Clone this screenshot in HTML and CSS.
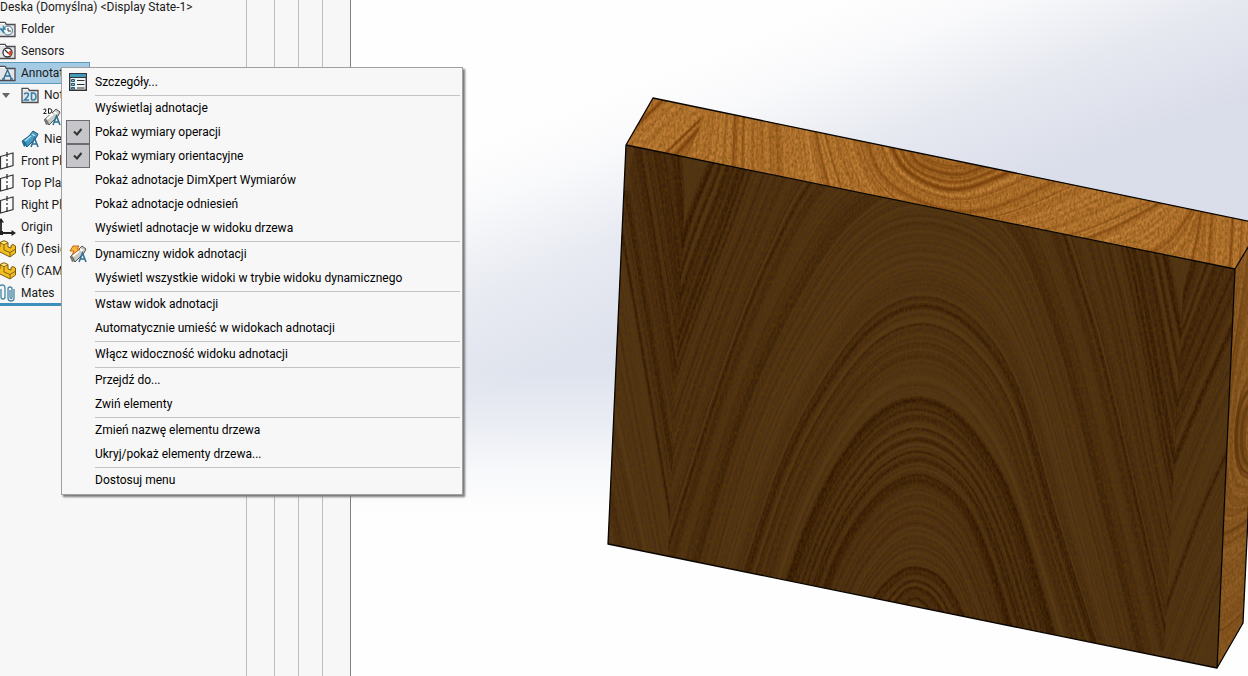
FILE: index.html
```html
<!DOCTYPE html>
<html lang="pl">
<head>
<meta charset="utf-8">
<title>Deska</title>
<link rel="stylesheet" href="styles.css">
</head>
<body>
<svg class="defs" aria-hidden="true">
  <symbol id="i-folder" viewBox="0 0 18 18"><path d="M1 16.500V2.500h6l1.500 2H17v12z" fill="#e4e5e8" stroke="#4c4c50" stroke-width="1.300"/><path d="M2 3.500h5" stroke="#fff"/></symbol>
  <symbol id="i-glass" viewBox="0 0 18 18"><path d="M1 12 9 5l4-4 4 3-2 4-9 9z" fill="#c9c9c6" stroke="#55554f"/><path d="m4 11 6-5m1-2 3 2" stroke="#fff" stroke-width="2"/><path d="M1 12c0-2 4-1 5 4l-3 1z" fill="#777773"/><path d="m10 17 3.500-9L17 17m-6-3h5" fill="none" stroke="#2f7194" stroke-width="1.600"/></symbol>
  <symbol id="i-plane" viewBox="0 0 18 18"><path d="M2.500 4.500 15 1v12.500L2.500 17z" fill="#fafafa" stroke="#333" stroke-width="1.200"/><path d="M9 0v18" stroke="#333" stroke-width="1.300" stroke-dasharray="5 2 2 2"/></symbol>
  <symbol id="i-part" viewBox="0 0 18 18"><path d="M2 7V2.500L6 .7l4 1.800V7l3 1V5.500l2-1 2.500 1.500v7L12 17 1 11.500V8z" fill="#f3bd22" stroke="#775c10"/><path d="m2 3 4 1.500L10 3M6 4.500V10l6 2.500 5-3M12 12.500V17" fill="none" stroke="#80630d"/><path d="m3 2.700 3-1.200 3 1.200-3 1.200z" fill="#ffe787"/></symbol>
</svg>

<div class="app">
  <aside class="panel">
    <ul class="tree">
      <li class="row row-root">Deska (Domyślna) &lt;Display State-1&gt;</li>
      <li class="row"><svg class="icon" viewBox="0 0 18 18"><use href="#i-folder"/><circle cx="10" cy="10.500" r="4.500" fill="#f5fafd" stroke="#456f87"/><path d="M10 8v3h3" fill="none" stroke="#333"/><path d="M2 9h5l-2-3M3 9l3 4" fill="none" stroke="#2f86ad" stroke-width="1.500"/></svg>Folder</li>
      <li class="row"><svg class="icon" viewBox="0 0 18 18"><use href="#i-folder"/><circle cx="9.500" cy="10.500" r="4.500" fill="#fff" stroke="#333" stroke-width="1.300"/><path d="M9.500 11 13 8l1 4-2 2z" fill="#d8472d"/><path d="m7 8 3 3" stroke="#333" stroke-width="1.300"/></svg>Sensors</li>
      <li class="row"><span class="picked"><svg class="icon" viewBox="0 0 18 18"><use href="#i-folder"/><path d="m5.500 15 4-9L13.500 15M7 12h5M4 15h3m5 0h3" fill="none" stroke="#2f7194" stroke-width="1.400"/></svg>Annotations</span></li>
      <li class="row row-twisty"><svg class="twisty" viewBox="0 0 8 5"><path d="M0 0h8L4 5z" fill="#666"/></svg><svg class="icon" viewBox="0 0 18 18"><use href="#i-folder"/><path d="M3.500 8.500q0-1.500 2-1.500t2 1.500q0 1.500-4 5.500h4.500M10.500 14V7q4.500-.5 4.500 3.500T10.500 14" fill="none" stroke="#2f7ea6" stroke-width="1.500"/></svg>Notes Area</li>
      <li class="row row-third"><svg class="icon" viewBox="0 0 18 18"><use href="#i-glass"/><path d="M0 0h9v7H0z" fill="#f7f7f7"/><path d="M.5 1.500Q3 0 3 2T.5 5.500h3M5.500 5.500v-5Q9 .5 9 3T5.500 5.500" fill="none" stroke="#222"/></svg></li>
      <li class="row row-second"><svg class="icon" viewBox="0 0 18 18"><path d="m1 11 7-5 4-5 5 3-2 4-9 9z" fill="#469bc5" stroke="#235871"/><path d="m4 11 6-5m1-2 3 2" stroke="#b1e1f4" stroke-width="1.500"/><path d="M1 12c0-2 4-1 5 3l-3 2z" fill="#236c91"/><path d="m10 17 3.500-9L17 17m-6-3h5" fill="none" stroke="#2f7194" stroke-width="1.600"/></svg>Nie</li>
      <li class="row"><svg class="icon"><use href="#i-plane"/></svg>Front Plane</li>
      <li class="row"><svg class="icon"><use href="#i-plane"/></svg>Top Plane</li>
      <li class="row"><svg class="icon"><use href="#i-plane"/></svg>Right Plane</li>
      <li class="row"><svg class="icon" viewBox="0 0 18 18"><path d="M3 1v14h13" fill="none" stroke="#222" stroke-width="1.800"/><path d="M0 4.500 3 0l3 4.500zM13.500 12l4.500 3-4.500 3z" fill="#222"/><path d="M1 13h4v4H1z" fill="#222"/></svg>Origin</li>
      <li class="row"><svg class="icon"><use href="#i-part"/></svg>(f) Design</li>
      <li class="row"><svg class="icon"><use href="#i-part"/></svg>(f) CAM</li>
      <li class="row row-last"><svg class="icon" viewBox="0 0 18 18"><path d="M3 5v8q0 2 2 2t2-2V4q0-3-3-3T1 4v9M12 6v7q0 1.500 1 1.500t1-1.500V5q0-2-2-2t-2 2v9q0 3 3 3t3-3V5" fill="none" stroke="#4386a4" stroke-width="1.300"/></svg>Mates</li>
    </ul>
    <div class="col col-wide"></div>
    <div class="col"></div>
    <div class="col"></div>
    <div class="col col-wide"></div>
  </aside>

  <main class="viewport">
    <svg class="scene" viewBox="351 0 897 676" preserveAspectRatio="xMinYMin slice" role="img" aria-label="Deska">
      <defs>
        <linearGradient id="sky" gradientUnits="userSpaceOnUse" x1="0" y1="0" x2="0" y2="676">
          <stop offset="0" stop-color="#dadde9"/><stop offset=".3" stop-color="#dadeea"/><stop offset=".55" stop-color="#dfe3ed"/><stop offset=".62" stop-color="#e9ecf3"/><stop offset=".7" stop-color="#f8f9fb"/><stop offset=".76" stop-color="#fefefe"/>
        </linearGradient>
        <linearGradient id="glow" gradientUnits="userSpaceOnUse" x1="460" y1="150" x2="546" y2="371">
          <stop offset="0" stop-color="#fefefe"/><stop offset=".25" stop-color="#fefefe" stop-opacity=".85"/><stop offset=".6" stop-color="#fefefe" stop-opacity=".35"/><stop offset="1" stop-color="#fefefe" stop-opacity="0"/>
        </linearGradient>
        <filter id="noise" x="0" y="0" width="1" height="1">
          <feTurbulence type="fractalNoise" baseFrequency=".5 .25" numOctaves="3" seed="4"/>
          <feColorMatrix values="0 0 0 0 .12  0 0 0 0 .05  0 0 0 0 0  2.200 0 0 0 -.8"/>
          <feComposite in2="SourceGraphic" operator="in"/>
        </filter>
        <clipPath id="c-front"><path d="M626 145 1235 269 1217 668 608 544z"/></clipPath>
        <clipPath id="c-fl"><path d="M600 100H689L667 580H600z"/></clipPath>
        <clipPath id="c-fm"><path d="M689 100 667 580 1162 690 1187 220z"/></clipPath>
        <clipPath id="c-fr"><path d="M1187 220 1162 690H1248V220z"/></clipPath>
        <clipPath id="c-top"><path d="M653 98 1262 224 1235 269 626 145z"/></clipPath>
        <clipPath id="c-tl"><path d="M600 80H705L700 126 684 165H600z"/></clipPath>
        <clipPath id="c-tm"><path d="M705 80 700 126 684 165 1180 275 1197 228 1203 190z"/></clipPath>
        <clipPath id="c-tr"><path d="M1203 190 1197 228 1180 275H1270V190z"/></clipPath>
        <clipPath id="c-side"><path d="M1235 269 1262 224 1243 623 1217 668z"/></clipPath>
      </defs>
      <path d="M351 0h897v676H351z" fill="url(#sky)"/>
      <path d="M351 0h897v676H351z" fill="url(#glow)"/>
      <g clip-path="url(#c-front)">
        <path d="M600 140h640v540H600z" fill="#4f3316"/>
        <g clip-path="url(#c-fl)"><g id="front-left"></g></g>
        <g clip-path="url(#c-fm)"><g id="front-mid"></g></g>
        <g clip-path="url(#c-fr)"><g id="front-right"></g></g>
        <path d="M600 140h640v540H600z" filter="url(#noise)" opacity=".5"/>
      </g>
      <g clip-path="url(#c-top)">
        <path d="M620 90h640v190H620z" fill="#bd7b35"/>
        <g clip-path="url(#c-tl)"><g id="top-left"></g></g>
        <g clip-path="url(#c-tm)"><g id="top-mid"></g></g>
        <g clip-path="url(#c-tr)"><g id="top-right"></g></g>
        <path d="M620 90h640v190H620z" filter="url(#noise)" opacity=".5"/>
      </g>
      <g clip-path="url(#c-side)">
        <path d="M1210 220h60v460h-60z" fill="#8d5a25"/>
        <g id="side"></g>
        <path d="M1210 220h60v460h-60z" filter="url(#noise)" opacity=".5"/>
      </g>
      <path d="M626 145 653 98 1262 224 1235 269zM626 145 608 544 1217 668 1235 269M1217 668 1243 623 1262 224" fill="none" stroke="#080502" stroke-width="1.300" stroke-linejoin="round"/>
    </svg>
  </main>

  <div class="menu" role="menu">
    <button class="item" role="menuitem"><svg class="item-icon" viewBox="0 0 18 18"><path d="M.7 .7h16.600v16.600H.7z" fill="#eef3f6" stroke="#333" stroke-width="1.400"/><path d="M1 1h16v3H1z" fill="#4397b9"/><path d="M0 4.500h18" stroke="#333"/><path d="M2.500 6.500h3v2h-3zm0 4h3v2h-3zm0 4h3v1.500h-3z" fill="#8ac5df" stroke="#23546b"/><path d="M8 7.500h7.500M8 11.500h7.500M8 15h7.500" stroke="#333" stroke-width="1.200"/></svg>Szczegóły...</button>
    <hr class="rule">
    <button class="item" role="menuitem">Wyświetlaj adnotacje</button>
    <label class="item"><span class="tick"><input class="tick-box" type="checkbox" checked><svg class="tick-mark" viewBox="0 0 10 10"><path d="m1 4.500 3 3L8.500 2" fill="none" stroke="#333" stroke-width="2"/></svg></span>Pokaż wymiary operacji</label>
    <label class="item"><span class="tick"><input class="tick-box" type="checkbox" checked><svg class="tick-mark" viewBox="0 0 10 10"><path d="m1 4.500 3 3L8.500 2" fill="none" stroke="#333" stroke-width="2"/></svg></span>Pokaż wymiary orientacyjne</label>
    <button class="item" role="menuitem">Pokaż adnotacje DimXpert Wymiarów</button>
    <button class="item" role="menuitem">Pokaż adnotacje odniesień</button>
    <button class="item" role="menuitem">Wyświetl adnotacje w widoku drzewa</button>
    <hr class="rule">
    <button class="item" role="menuitem"><svg class="item-icon" viewBox="0 0 18 18"><use href="#i-glass"/><path d="M4 1h6L8 4h3L3 10l2-4H1z" fill="#f8b83c" stroke="#c5641b"/></svg>Dynamiczny widok adnotacji</button>
    <button class="item" role="menuitem">Wyświetl wszystkie widoki w trybie widoku dynamicznego</button>
    <hr class="rule">
    <button class="item" role="menuitem">Wstaw widok adnotacji</button>
    <button class="item" role="menuitem">Automatycznie umieść w widokach adnotacji</button>
    <hr class="rule">
    <button class="item" role="menuitem">Włącz widoczność widoku adnotacji</button>
    <hr class="rule">
    <button class="item" role="menuitem">Przejdź do...</button>
    <button class="item" role="menuitem">Zwiń elementy</button>
    <hr class="rule">
    <button class="item" role="menuitem">Zmień nazwę elementu drzewa</button>
    <button class="item" role="menuitem">Ukryj/pokaż elementy drzewa...</button>
    <hr class="rule">
    <button class="item" role="menuitem">Dostosuj menu</button>
  </div>
</div>
<script src="grain.js"></script>
</body>
</html>
```
FILE: styles.css
```css
* { box-sizing: border-box; }

body {
  margin: 0;
  font-family: Roboto, "Noto Sans", sans-serif;
  font-size: 12px;
  line-height: 16px;
  color: #1a1a1a;
}

.defs { position: absolute; width: 0; height: 0; }

.app {
  position: relative;
  display: flex;
  min-height: 100vh;
  overflow: hidden;
}

.panel {
  display: flex;
  flex: none;
  background: #f7f7f7;
  border-right: 1px solid #828282;
}

.tree {
  width: 246px;
  margin: -4px 0 0;
  padding: 0;
  list-style: none;
}

.row {
  display: flex;
  align-items: center;
  gap: 5px;
  height: 22px;
  margin-left: -2px;
  white-space: nowrap;
}

.row-root { margin-left: 0; }
.row-second { padding-left: 23px; }
.row-third { padding-left: 45px; }
.row-twisty { padding-left: 4px; }

.row-last {
  height: 24px;
  border-bottom: 3px solid #3f8fbc;
}

.icon { flex: none; width: 18px; height: 18px; }
.twisty { width: 8px; height: 5px; margin-right: 6px; }

.picked {
  display: flex;
  align-items: center;
  gap: 5px;
  width: 92px;
  height: 22px;
  background: #a5cae4;
  border: 1px solid #5f9abf;
  border-left: 0;
}

.col { width: 24px; border-left: 1px solid #bdbdbd; }
.col-wide { width: 28px; }

.viewport { flex: 1; min-width: 0; display: flex; }
.scene { width: 100%; height: 100vh; }

.menu {
  position: absolute;
  left: 61px;
  top: 67px;
  width: 402px;
  padding: 2px;
  background: #f7f7f7;
  border: 1px solid #a0a0a0;
  box-shadow: 2px 2px 2px #777;
}

.item {
  position: relative;
  display: flex;
  align-items: center;
  width: 100%;
  height: 24px;
  padding: 0 0 0 31px;
  border: 0;
  background: none;
  font: inherit;
  color: #000;
  text-align: left;
  white-space: nowrap;
}

.rule {
  height: 1px;
  margin: 1px 0 0 31px;
  border: 0;
  background: #c3c3c3;
}

.item-icon { position: absolute; left: 5px; width: 18px; height: 18px; }
.tick { position: absolute; left: 2px; display: grid; width: 24px; height: 24px; place-items: center; }

.tick-box {
  grid-area: 1 / 1;
  appearance: none;
  width: 24px;
  height: 24px;
  margin: 0;
  background: #c6c6ca;
  border: 1px solid #6b6b6f;
}

.tick-mark { grid-area: 1 / 1; z-index: 1; width: 10px; height: 10px; }
```
FILE: grain.js
```js
// Draws wood grain: each family of lines is blended between a few key curves.
let seed = 7;
const rand = () => (seed = (seed * 16807) % 2147483647) / 2147483647;

function smooth(p) {
  let d = `M${p[0][0].toFixed(1)} ${p[0][1].toFixed(1)}`;
  for (let i = 0; i < p.length - 1; i++) {
    const a = p[i - 1] || p[i], b = p[i], c = p[i + 1], e = p[i + 2] || c;
    d += `C${[b[0] + (c[0] - a[0]) / 6, b[1] + (c[1] - a[1]) / 6,
      c[0] - (e[0] - b[0]) / 6, c[1] - (e[1] - b[1]) / 6, c[0], c[1]].map(n => n.toFixed(1)).join(' ')}`;
  }
  return d;
}

function at(keys, t) {
  const i = Math.min(Math.floor(t), keys.length - 2), f = t - i;
  return keys[i].map((p, k) => [p[0] + (keys[i + 1][k][0] - p[0]) * f, p[1] + (keys[i + 1][k][1] - p[1]) * f]);
}

function grain(id, keys, count, dark, light, bold) {
  const lines = [];
  const add = (t, color, width, opacity) => lines.push(
    `<path d="${smooth(at(keys, t))}" fill="none" stroke="${color}" stroke-width="${width}" opacity="${opacity}"/>`);
  for (let i = 0; i < count; i++) {
    const t = (i + rand()) / count * (keys.length - 1);
    add(t, rand() < 0.55 ? dark : light, (0.8 + rand() * 3).toFixed(1), (0.04 + rand() * 0.15).toFixed(2));
  }
  bold.forEach(([t, w, o]) => {
    add(t, dark, w * 2, o * 0.35);
    add(t, dark, w * 0.8, o * 0.75);
  });
  document.getElementById(id).innerHTML = lines.join('');
}

const D = '#2b1200', L = '#654623';

grain('front-mid', [
  [[898, 625], [902, 615], [906, 608], [910, 603], [915, 601], [921, 604], [926, 609], [931, 616], [936, 625]],
  [[868, 606], [880, 589], [891, 578], [902, 570], [914, 567], [928, 570], [941, 578], [953, 594], [965, 618]],
  [[823, 590], [838, 553], [858, 519], [885, 489], [917, 475], [947, 487], [970, 513], [991, 563], [1012, 630]],
  [[786, 583], [808, 522], [838, 462], [876, 415], [915, 398], [955, 413], [993, 460], [1020, 520], [1056, 640]],
  [[746, 578], [785, 465], [825, 388], [872, 328], [922, 306], [970, 327], [1015, 392], [1053, 520], [1095, 648]],
  [[708, 570], [750, 430], [800, 325], [860, 240], [925, 215], [1000, 250], [1047, 350], [1090, 505], [1128, 655]],
  [[664, 560], [720, 385], [768, 262], [825, 165], [930, 90], [1025, 150], [1087, 305], [1130, 475], [1170, 650]],
  [[640, 470], [674, 366], [720, 240], [790, 80], [930, -20], [1080, 90], [1130, 260], [1170, 467], [1205, 640]],
  [[664, 330], [681, 235], [705, 165], [760, 60], [930, -80], [1120, 80], [1160, 210], [1180, 300], [1210, 430]]
], 380, D, L, [
  [0.1, 2, 0.6], [0.4, 2, 0.5], [0.6, 2, 0.5], [0.8, 3, 0.3], [0.98, 2, 0.7], [1.5, 1, 0.2], [1.95, 4, 0.5], [2, 2, 0.7], [2.2, 3, 0.5],
  [2.3, 1, 0.8], [2.45, 3, 0.4], [2.6, 2, 0.6], [2.75, 5, 0.4], [2.85, 2, 0.6], [2.97, 4, 0.7], [3.6, 1, 0.3], [3.8, 2, 0.4],
  [4, 3, 0.7], [4.1, 1, 0.4], [5.4, 8, 0.15], [6, 2, 0.7], [6.1, 1, 0.5], [6.35, 6, 0.2], [6.9, 3, 0.5], [7, 2, 0.9],
  [7.15, 5, 0.5], [7.3, 2, 0.5], [7.45, 3, 0.6], [7.65, 2, 0.6], [7.85, 3, 0.7]
]);

grain('front-left', [
  [[681, 140], [684, 200], [687, 230]],
  [[660, 140], [672, 220], [682, 300]],
  [[636, 140], [656, 260], [676, 380]],
  [[619, 225], [645, 375], [671, 530]],
  [[604, 400], [625, 490], [650, 600]],
  [[590, 500], [600, 540], [610, 600]]
], 90, D, L, [[0.2, 4, 0.7], [0.5, 3, 0.5], [0.9, 2, 0.7], [1.3, 4, 0.5], [1.6, 3, 0.5], [1.9, 3, 0.7], [2.05, 2, 0.5], [2.95, 2, 0.7], [2.6, 5, 0.4]]);

grain('front-right', [
  [[1194, 250], [1186, 280], [1178, 310]],
  [[1215, 255], [1194, 310], [1173, 365]],
  [[1240, 262], [1206, 340], [1168, 430]],
  [[1242, 310], [1206, 390], [1166, 485]],
  [[1240, 430], [1200, 520], [1155, 645]],
  [[1240, 560], [1215, 620], [1180, 710]]
], 90, D, L, [[0.2, 3, 0.7], [0.8, 2, 0.5], [1.2, 3, 0.5], [1.5, 4, 0.4], [1.9, 3, 0.7], [2.3, 2, 0.5], [2.9, 4, 0.6], [3.95, 2, 0.7]]);

const TD = '#7b3e0c', TL = '#d99a4d';

grain('top-mid', [
  [[925, 150], [932, 156], [942, 160], [955, 162], [975, 160]],
  [[905, 140], [915, 162], [938, 173], [965, 175], [1000, 160]],
  [[886, 138], [902, 168], [935, 188], [970, 189], [1030, 165]],
  [[865, 133], [882, 175], [925, 203], [985, 210], [1072, 173]],
  [[825, 125], [842, 180], [868, 225], [1035, 240], [1163, 194]],
  [[780, 110], [785, 190], [800, 240], [1110, 260], [1195, 205]],
  [[740, 100], [738, 170], [740, 230], [1150, 275], [1205, 222]],
  [[702, 95], [692, 140], [688, 200], [1175, 290], [1215, 210]]
], 260, TD, TL, [[0.4, 6, 0.5], [0.9, 2, 0.7], [1.1, 6, 0.4], [1.4, 2, 0.5], [1.9, 3, 1], [3, 2, 0.5], [3.2, 1, 0.6], [4.05, 2, 0.5], [4.25, 2, 0.7], [5.1, 1, 0.4], [5.9, 2, 0.5], [6.1, 3, 0.6], [6.3, 2, 0.4]]);

grain('top-left', [
  [[600, 140], [625, 115], [655, 85]],
  [[622, 145], [646, 122], [678, 92]],
  [[660, 165], [683, 142], [710, 116]],
  [[680, 170], [690, 150], [705, 125]]
], 55, TD, TL, [[0.8, 2, 0.8], [1.9, 2, 1], [2.3, 3, 0.9]]);

grain('top-right', [
  [[1180, 280], [1192, 240], [1198, 210]],
  [[1205, 280], [1207, 240], [1209, 205]],
  [[1235, 280], [1238, 240], [1240, 205]],
  [[1265, 280], [1268, 240], [1270, 205]]
], 45, TD, TL, [[0.3, 2, 0.8], [1.1, 2, 0.5], [1.8, 2, 0.8], [2.1, 1, 0.6]]);

grain('side', [
  [[1262, 410], [1250, 420], [1247, 440], [1250, 455], [1262, 462]],
  [[1262, 375], [1242, 400], [1236, 440], [1242, 470], [1262, 478]],
  [[1260, 250], [1240, 330], [1226, 440], [1232, 500], [1262, 495]],
  [[1235, 240], [1220, 400], [1205, 500], [1220, 535], [1262, 510]],
  [[1180, 400], [1190, 500], [1200, 560], [1220, 590], [1262, 555]],
  [[1150, 500], [1180, 600], [1200, 650], [1220, 670], [1262, 630]]
], 110, '#57300c', '#b07a3d', [[0.5, 4, 0.7], [0.95, 2, 0.9], [1.1, 1, 0.6], [3, 2, 0.6], [3.2, 1, 0.5], [4.5, 1, 0.5]]);
```
